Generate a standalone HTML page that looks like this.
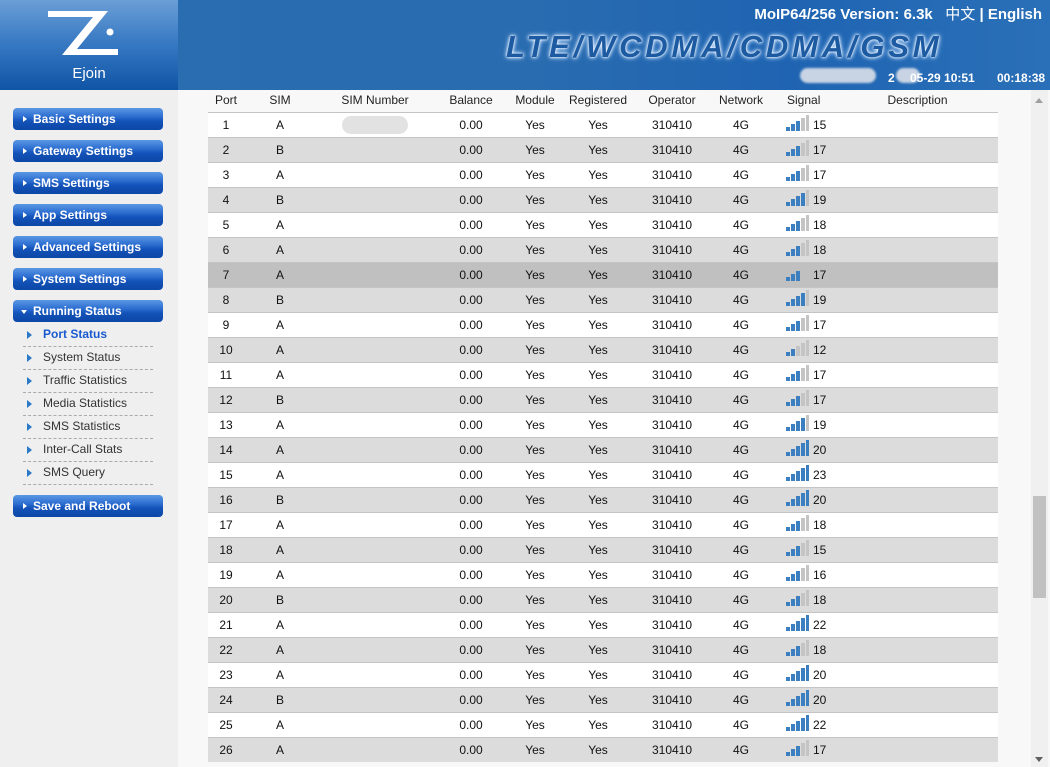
<!DOCTYPE html>
<html><head><meta charset="utf-8"><style>
*{margin:0;padding:0;box-sizing:border-box}
body{width:1050px;height:767px;overflow:hidden;background:#f8f8f8;font-family:"Liberation Sans","Noto Sans CJK SC",sans-serif;position:relative}
#hdr{position:absolute;left:0;top:0;width:1050px;height:90px;background:linear-gradient(90deg,#2a6db0 0%,#2a6cb0 50%,#1f64b2 75%,#2a70b8 100%)}
#logo{position:absolute;left:0;top:0;width:178px;height:90px;background:linear-gradient(180deg,#6a9fd6 0%,#3a7bc4 45%,#0f55a6 100%)}
#logo .e{position:absolute;left:0;width:178px;top:65px;text-align:center;color:#fff;font-size:15px}
#hdr .t{position:absolute;left:506px;top:29px;font-size:31px;font-weight:bold;font-style:italic;letter-spacing:3.8px;color:#1c5aa2;text-shadow:0 0 2px #fff,0 0 4px #e0f0ff,0 0 6px #9cc8ff}
#hdr .v{position:absolute;right:8px;top:3px;color:#fff;font-size:15px;font-weight:bold}
#hdr .v span{font-weight:normal}
.dt{position:absolute;top:71px;color:#fff;font-size:12px;font-weight:bold}
.blur{position:absolute;background:#c8d4e4;border-radius:8px;filter:blur(1px)}
#side{position:absolute;left:0;top:90px;width:178px;height:677px;background:#efefef}
.btn{position:absolute;left:13px;width:150px;height:22px;border-radius:4px;background:linear-gradient(180deg,#5a98e4 0%,#2c6dd0 40%,#1352b8 60%,#0c47a6 100%);color:#fff;font-size:12px;font-weight:bold;line-height:22px;padding-left:20px}
.btn:before{content:"";position:absolute;left:10px;top:8px;border-left:4px solid #fff;border-top:3px solid transparent;border-bottom:3px solid transparent}
.btn.o:before{left:8px;top:10px;border-top:4px solid #fff;border-left:3px solid transparent;border-right:3px solid transparent;border-bottom:0}
.sub{position:absolute;left:23px;width:130px;height:23px;border-bottom:1px dashed #aaa;font-size:12px;color:#333;line-height:21px;padding-left:20px}
.sub:before{content:"";position:absolute;left:4px;top:7px;border-left:5px solid #2a78c8;border-top:4px solid transparent;border-bottom:4px solid transparent}
.sub.a{color:#1a5ad0;font-weight:bold}
table{position:absolute;left:208px;top:89px;width:790px;border-collapse:collapse;table-layout:fixed;font-size:12px;color:#111}
th{font-weight:normal;height:23px;text-align:center;color:#222;padding:0}
td{height:25px;border-top:1px solid #c4c4c4;text-align:center;padding:1px 0 0;line-height:23px}
tr.g td{background:#dcdcdc}tr.w td{background:#fff}tr.h td{background:#c0c0c0}
.sg{text-align:left;padding-left:14px!important}
.b{display:inline-block;width:22px;height:16px;position:relative;vertical-align:-2px;margin-right:5px}
.b i{position:absolute;bottom:0;width:4px;background:#c4c4c4}
.b i.on{background:#3c7fc0}
.b i:nth-child(1){left:0;height:4px}.b i:nth-child(2){left:5px;height:7px}.b i:nth-child(3){left:10px;height:10px}.b i:nth-child(4){left:15px;height:13px}.b i:nth-child(5){left:20px;width:3px;height:16px}
#sb{position:absolute;left:1031px;top:90px;width:17px;height:677px;background:#f0f0f0}
#th{position:absolute;left:1033px;top:496px;width:13px;height:102px;background:#c1c1c1}
</style></head><body>
<div id="hdr">
<div id="logo">
<svg width="178" height="65" style="position:absolute;left:0;top:0"><path d="M48 11 H108 L77 49 H118 V55 H62 L93 17 H48 Z" fill="#fff"/><circle cx="110" cy="32" r="3.5" fill="#fff"/></svg>
<div class="e">Ejoin</div></div>
<div class="t">LTE/WCDMA/CDMA/GSM</div>
<div class="v">MoIP64/256 Version: 6.3k &nbsp; <span>中文</span> | English</div>
<div class="blur" style="left:800px;top:68px;width:76px;height:15px"></div>
<div class="blur" style="left:896px;top:68px;width:24px;height:15px"></div>
<div class="dt" style="left:888px">2</div>
<div class="dt" style="left:910px">05-29 10:51</div>
<div class="dt" style="left:997px">00:18:38</div>
</div>
<div id="side">
<div class="btn" style="top:18px">Basic Settings</div>
<div class="btn" style="top:50px">Gateway Settings</div>
<div class="btn" style="top:82px">SMS Settings</div>
<div class="btn" style="top:114px">App Settings</div>
<div class="btn" style="top:146px">Advanced Settings</div>
<div class="btn" style="top:178px">System Settings</div>
<div class="btn o" style="top:210px">Running Status</div>
<div class="sub a" style="top:234px">Port Status</div>
<div class="sub" style="top:257px">System Status</div>
<div class="sub" style="top:280px">Traffic Statistics</div>
<div class="sub" style="top:303px">Media Statistics</div>
<div class="sub" style="top:326px">SMS Statistics</div>
<div class="sub" style="top:349px">Inter-Call Stats</div>
<div class="sub" style="top:372px">SMS Query</div>
<div class="btn" style="top:405px">Save and Reboot</div>
</div>
<table>
<colgroup><col style="width:36px"><col style="width:72px"><col style="width:118px"><col style="width:74px"><col style="width:54px"><col style="width:72px"><col style="width:76px"><col style="width:62px"><col style="width:95px"><col style="width:131px"></colgroup>
<tr><th>Port</th><th>SIM</th><th>SIM Number</th><th>Balance</th><th>Module</th><th>Registered</th><th>Operator</th><th>Network</th><th style="text-align:left;padding-left:15px">Signal</th><th style="padding-right:30px">Description</th></tr>
<tr class="w"><td>1</td><td>A</td><td><span style="display:inline-block;width:66px;height:18px;border-radius:9px;background:#e2e2e2;vertical-align:middle"></span></td><td>0.00</td><td>Yes</td><td>Yes</td><td>310410</td><td>4G</td><td class="sg"><span class="b"><i class="on"></i><i class="on"></i><i class="on"></i><i></i><i></i></span>15</td><td></td></tr>
<tr class="g"><td>2</td><td>B</td><td></td><td>0.00</td><td>Yes</td><td>Yes</td><td>310410</td><td>4G</td><td class="sg"><span class="b"><i class="on"></i><i class="on"></i><i class="on"></i><i></i><i></i></span>17</td><td></td></tr>
<tr class="w"><td>3</td><td>A</td><td></td><td>0.00</td><td>Yes</td><td>Yes</td><td>310410</td><td>4G</td><td class="sg"><span class="b"><i class="on"></i><i class="on"></i><i class="on"></i><i></i><i></i></span>17</td><td></td></tr>
<tr class="g"><td>4</td><td>B</td><td></td><td>0.00</td><td>Yes</td><td>Yes</td><td>310410</td><td>4G</td><td class="sg"><span class="b"><i class="on"></i><i class="on"></i><i class="on"></i><i class="on"></i><i></i></span>19</td><td></td></tr>
<tr class="w"><td>5</td><td>A</td><td></td><td>0.00</td><td>Yes</td><td>Yes</td><td>310410</td><td>4G</td><td class="sg"><span class="b"><i class="on"></i><i class="on"></i><i class="on"></i><i></i><i></i></span>18</td><td></td></tr>
<tr class="g"><td>6</td><td>A</td><td></td><td>0.00</td><td>Yes</td><td>Yes</td><td>310410</td><td>4G</td><td class="sg"><span class="b"><i class="on"></i><i class="on"></i><i class="on"></i><i></i><i></i></span>18</td><td></td></tr>
<tr class="h"><td>7</td><td>A</td><td></td><td>0.00</td><td>Yes</td><td>Yes</td><td>310410</td><td>4G</td><td class="sg"><span class="b"><i class="on"></i><i class="on"></i><i class="on"></i><i style="background:#c0c0c0"></i><i style="background:#c0c0c0"></i></span>17</td><td></td></tr>
<tr class="g"><td>8</td><td>B</td><td></td><td>0.00</td><td>Yes</td><td>Yes</td><td>310410</td><td>4G</td><td class="sg"><span class="b"><i class="on"></i><i class="on"></i><i class="on"></i><i class="on"></i><i></i></span>19</td><td></td></tr>
<tr class="w"><td>9</td><td>A</td><td></td><td>0.00</td><td>Yes</td><td>Yes</td><td>310410</td><td>4G</td><td class="sg"><span class="b"><i class="on"></i><i class="on"></i><i class="on"></i><i></i><i></i></span>17</td><td></td></tr>
<tr class="g"><td>10</td><td>A</td><td></td><td>0.00</td><td>Yes</td><td>Yes</td><td>310410</td><td>4G</td><td class="sg"><span class="b"><i class="on"></i><i class="on"></i><i></i><i></i><i></i></span>12</td><td></td></tr>
<tr class="w"><td>11</td><td>A</td><td></td><td>0.00</td><td>Yes</td><td>Yes</td><td>310410</td><td>4G</td><td class="sg"><span class="b"><i class="on"></i><i class="on"></i><i class="on"></i><i></i><i></i></span>17</td><td></td></tr>
<tr class="g"><td>12</td><td>B</td><td></td><td>0.00</td><td>Yes</td><td>Yes</td><td>310410</td><td>4G</td><td class="sg"><span class="b"><i class="on"></i><i class="on"></i><i class="on"></i><i></i><i></i></span>17</td><td></td></tr>
<tr class="w"><td>13</td><td>A</td><td></td><td>0.00</td><td>Yes</td><td>Yes</td><td>310410</td><td>4G</td><td class="sg"><span class="b"><i class="on"></i><i class="on"></i><i class="on"></i><i class="on"></i><i></i></span>19</td><td></td></tr>
<tr class="g"><td>14</td><td>A</td><td></td><td>0.00</td><td>Yes</td><td>Yes</td><td>310410</td><td>4G</td><td class="sg"><span class="b"><i class="on"></i><i class="on"></i><i class="on"></i><i class="on"></i><i class="on"></i></span>20</td><td></td></tr>
<tr class="w"><td>15</td><td>A</td><td></td><td>0.00</td><td>Yes</td><td>Yes</td><td>310410</td><td>4G</td><td class="sg"><span class="b"><i class="on"></i><i class="on"></i><i class="on"></i><i class="on"></i><i class="on"></i></span>23</td><td></td></tr>
<tr class="g"><td>16</td><td>B</td><td></td><td>0.00</td><td>Yes</td><td>Yes</td><td>310410</td><td>4G</td><td class="sg"><span class="b"><i class="on"></i><i class="on"></i><i class="on"></i><i class="on"></i><i class="on"></i></span>20</td><td></td></tr>
<tr class="w"><td>17</td><td>A</td><td></td><td>0.00</td><td>Yes</td><td>Yes</td><td>310410</td><td>4G</td><td class="sg"><span class="b"><i class="on"></i><i class="on"></i><i class="on"></i><i></i><i></i></span>18</td><td></td></tr>
<tr class="g"><td>18</td><td>A</td><td></td><td>0.00</td><td>Yes</td><td>Yes</td><td>310410</td><td>4G</td><td class="sg"><span class="b"><i class="on"></i><i class="on"></i><i class="on"></i><i></i><i></i></span>15</td><td></td></tr>
<tr class="w"><td>19</td><td>A</td><td></td><td>0.00</td><td>Yes</td><td>Yes</td><td>310410</td><td>4G</td><td class="sg"><span class="b"><i class="on"></i><i class="on"></i><i class="on"></i><i></i><i></i></span>16</td><td></td></tr>
<tr class="g"><td>20</td><td>B</td><td></td><td>0.00</td><td>Yes</td><td>Yes</td><td>310410</td><td>4G</td><td class="sg"><span class="b"><i class="on"></i><i class="on"></i><i class="on"></i><i></i><i></i></span>18</td><td></td></tr>
<tr class="w"><td>21</td><td>A</td><td></td><td>0.00</td><td>Yes</td><td>Yes</td><td>310410</td><td>4G</td><td class="sg"><span class="b"><i class="on"></i><i class="on"></i><i class="on"></i><i class="on"></i><i class="on"></i></span>22</td><td></td></tr>
<tr class="g"><td>22</td><td>A</td><td></td><td>0.00</td><td>Yes</td><td>Yes</td><td>310410</td><td>4G</td><td class="sg"><span class="b"><i class="on"></i><i class="on"></i><i class="on"></i><i></i><i></i></span>18</td><td></td></tr>
<tr class="w"><td>23</td><td>A</td><td></td><td>0.00</td><td>Yes</td><td>Yes</td><td>310410</td><td>4G</td><td class="sg"><span class="b"><i class="on"></i><i class="on"></i><i class="on"></i><i class="on"></i><i class="on"></i></span>20</td><td></td></tr>
<tr class="g"><td>24</td><td>B</td><td></td><td>0.00</td><td>Yes</td><td>Yes</td><td>310410</td><td>4G</td><td class="sg"><span class="b"><i class="on"></i><i class="on"></i><i class="on"></i><i class="on"></i><i class="on"></i></span>20</td><td></td></tr>
<tr class="w"><td>25</td><td>A</td><td></td><td>0.00</td><td>Yes</td><td>Yes</td><td>310410</td><td>4G</td><td class="sg"><span class="b"><i class="on"></i><i class="on"></i><i class="on"></i><i class="on"></i><i class="on"></i></span>22</td><td></td></tr>
<tr class="g"><td>26</td><td>A</td><td></td><td>0.00</td><td>Yes</td><td>Yes</td><td>310410</td><td>4G</td><td class="sg"><span class="b"><i class="on"></i><i class="on"></i><i class="on"></i><i></i><i></i></span>17</td><td></td></tr>
</table>
<div id="sb"><div style="position:absolute;left:4px;top:8px;border-bottom:5px solid #a0a0a0;border-left:4px solid transparent;border-right:4px solid transparent"></div><div style="position:absolute;left:4px;top:667px;border-top:5px solid #606060;border-left:4px solid transparent;border-right:4px solid transparent"></div></div>
<div id="th"></div>
</body></html>
